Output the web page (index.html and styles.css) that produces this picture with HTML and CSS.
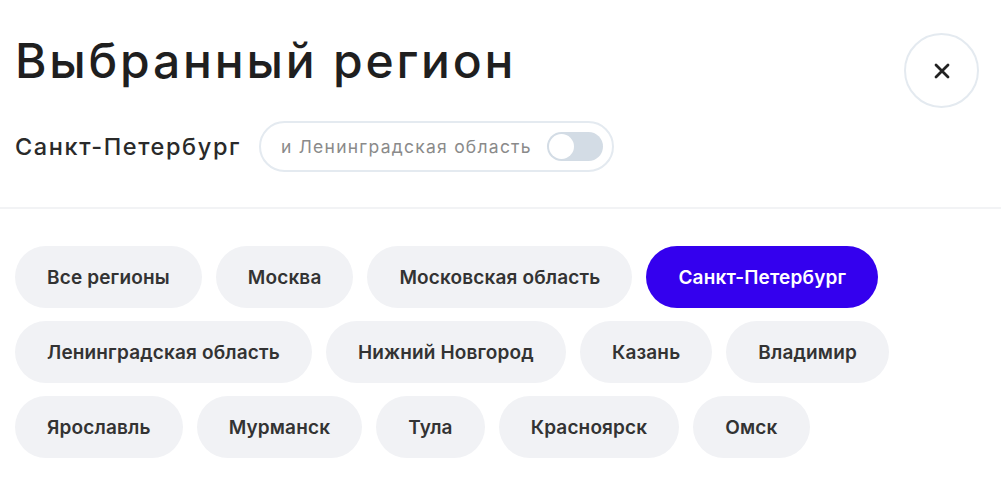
FILE: index.html
```html
<!DOCTYPE html>
<html lang="ru">
<head>
<meta charset="utf-8">
<title>Выбранный регион</title>
<link rel="stylesheet" href="styles.css">
</head>
<body>
<div class="modal">
  <header class="header">
    <div class="header-main">
      <h1 class="title">Выбранный регион</h1>
      <div class="current">
        <span class="current-name">Санкт-Петербург</span>
        <label class="option">
          <span class="option-text">и Ленинградская область</span>
          <span class="switch"><span class="knob"></span></span>
        </label>
      </div>
    </div>
    <button class="close" aria-label="Закрыть">
      <svg width="18" height="18" viewBox="0 0 18 18"><path d="M3 3L15 15M15 3L3 15" stroke="#222" stroke-width="2.8" stroke-linecap="round"/></svg>
    </button>
  </header>
  <div class="divider"></div>
  <div class="chips">
    <span class="chip">Все регионы</span>
    <span class="chip">Москва</span>
    <span class="chip">Московская область</span>
    <span class="chip chip-active">Санкт-Петербург</span>
    <span class="chip">Ленинградская область</span>
    <span class="chip">Нижний Новгород</span>
    <span class="chip">Казань</span>
    <span class="chip">Владимир</span>
    <span class="chip">Ярославль</span>
    <span class="chip">Мурманск</span>
    <span class="chip">Тула</span>
    <span class="chip">Красноярск</span>
    <span class="chip">Омск</span>
  </div>
</div>
</body>
</html>
```

FILE: styles.css
```css
* { box-sizing: border-box; }
html, body { margin: 0; padding: 0; background: #fff; }
body {
  font-family: Inter, "Noto Sans", sans-serif;
  color: #222;
}
.modal { width: 1001px; }
.header {
  display: flex;
  justify-content: space-between;
  align-items: flex-start;
  padding: 33px 22px 0 15px;
  height: 207px;
}
.header-main { display: flex; flex-direction: column; }
.title {
  margin: 0;
  font-size: 48px;
  font-weight: 500;
  line-height: 56px;
  letter-spacing: 2.8px;
  color: #1f1f1f;
}
.current {
  display: flex;
  align-items: center;
  gap: 18px;
  margin-top: 32px;
}
.current-name {
  font-size: 23.5px;
  font-weight: 500;
  letter-spacing: 1.6px;
  color: #2a2a2a;
}
.option {
  display: flex;
  align-items: center;
  height: 51px;
  padding: 0 9px 0 20px;
  border: 2px solid #e4eaf0;
  border-radius: 26px;
  gap: 15px;
}
.option-text {
  font-size: 17.5px;
  letter-spacing: 1.25px;
  color: #8a8a8a;
}
.switch {
  display: flex;
  align-items: center;
  width: 56px;
  height: 29px;
  border-radius: 15px;
  background: #d3dce5;
  padding: 2px;
}
.knob {
  width: 25px;
  height: 25px;
  border-radius: 50%;
  background: #fff;
}
.close {
  width: 75px;
  height: 75px;
  border-radius: 50%;
  border: 2px solid #e4eaf0;
  background: #fff;
  display: flex;
  align-items: center;
  justify-content: center;
  padding: 0;
}
.divider { height: 2px; background: #f2f3f5; }
.chips {
  display: flex;
  flex-wrap: wrap;
  gap: 13px 14px;
  padding: 37px 15px 0;
}
.chip {
  display: flex;
  align-items: center;
  height: 62px;
  padding: 0 32px;
  border-radius: 31px;
  background: #f1f2f5;
  font-size: 19px;
  font-weight: 600;
  letter-spacing: 0.15px;
  color: #333;
}
.chip-active {
  background: #3400ee;
  color: #fff;
}
```
